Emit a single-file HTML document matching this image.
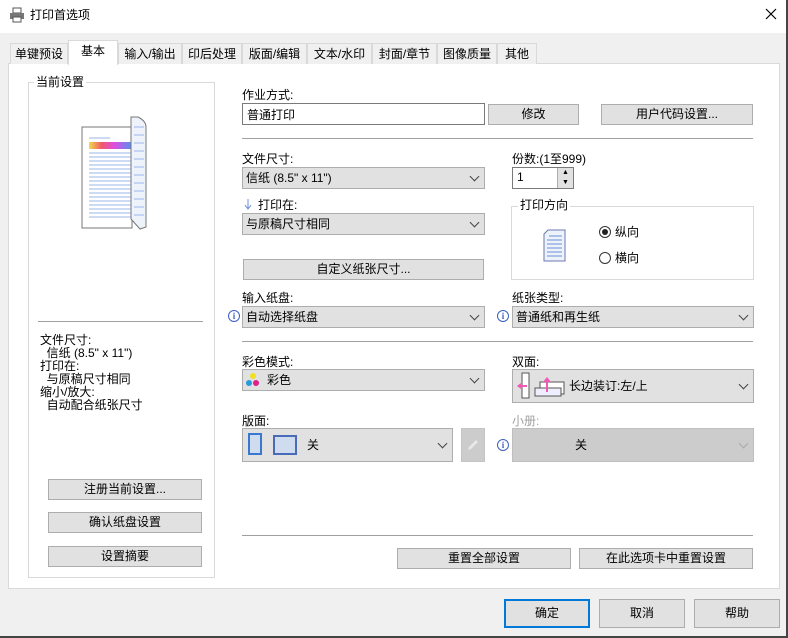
<!DOCTYPE html><html><head><meta charset="utf-8"><style>
*{box-sizing:border-box;margin:0;padding:0}
body{width:788px;height:638px;position:relative;background:#f0f0f0;font-family:"Liberation Sans","Noto Sans CJK SC",sans-serif;font-size:12px;color:#000;overflow:hidden}
.a{position:absolute}
.t{position:absolute;white-space:nowrap;line-height:14px}
.btn{position:absolute;background:#e1e1e1;border:1px solid #adadad;text-align:center;line-height:18px;white-space:nowrap}
.sel{position:absolute;background:#e1e1e1;border:1px solid #adadad;padding-left:3px;white-space:nowrap}
.chev{position:absolute;right:6px;width:7px;height:7px;border-right:1px solid #444;border-bottom:1px solid #444;transform:rotate(45deg)}
.hr{position:absolute;height:1px;background:#a0a0a0}
.tab{position:absolute;top:43px;height:21px;background:#f0f0f0;border:1px solid #d9d9d9;border-bottom:none;text-align:center;line-height:20px;white-space:nowrap}
.info{position:absolute;width:12px;height:12px;border:1px solid #3d5fc4;border-radius:50%;color:#3d5fc4;font-size:9px;line-height:10px;text-align:center;font-family:"Liberation Serif",serif;font-weight:bold}
.radio{position:absolute;width:12px;height:12px;border:1px solid #333;border-radius:50%;background:#fff}
</style></head><body>
<div class="a" style="left:0;top:0;width:788px;height:33px;background:#fff"></div>
<svg class="a" style="left:9px;top:7px" width="16" height="16"><rect x="4" y="1" width="8" height="5" fill="#fff" stroke="#555"/><rect x="1" y="6" width="14" height="6" fill="#777"/><rect x="4" y="10" width="8" height="5" fill="#fff" stroke="#555"/></svg>
<div class="t" style="left:30px;top:8px">打印首选项</div>
<svg class="a" style="left:765px;top:8px" width="12" height="12"><path d="M1 1L11 11M11 1L1 11" stroke="#000" stroke-width="1.2"/></svg>
<div class="a" style="left:8px;top:63px;width:772px;height:526px;background:#fff;border:1px solid #d9d9d9"></div>
<div class="tab" style="left:10px;width:58px">单键预设</div>
<div class="tab" style="left:68px;width:50px;top:40px;height:25px;background:#fff;z-index:2;line-height:20px">基本</div>
<div class="tab" style="left:118px;width:64px">输入/输出</div>
<div class="tab" style="left:182px;width:60px">印后处理</div>
<div class="tab" style="left:242px;width:65px">版面/编辑</div>
<div class="tab" style="left:307px;width:65px">文本/水印</div>
<div class="tab" style="left:372px;width:65px">封面/章节</div>
<div class="tab" style="left:437px;width:60px">图像质量</div>
<div class="tab" style="left:497px;width:40px">其他</div>

<div class="a" style="left:28px;top:82px;width:187px;height:496px;border:1px solid #d9d9d9"></div>
<div class="t" style="left:34px;top:75px;background:#fff;padding:0 2px">当前设置</div>
<svg class="a" style="left:80px;top:115px" width="72" height="116">
<rect x="2" y="12" width="50" height="101" fill="#fff" stroke="#777"/>
<line x1="9" y1="23" x2="30" y2="23" stroke="#9bb5e8"/>
<defs><linearGradient id="g"><stop offset="0" stop-color="#f5d84a"/><stop offset=".3" stop-color="#f05a6a"/><stop offset=".6" stop-color="#e04ee0"/><stop offset="1" stop-color="#5a8ef0"/></linearGradient></defs>
<rect x="9" y="27" width="42" height="7" fill="url(#g)"/>
<g stroke="#9bb5e8"><line x1="9" y1="38" x2="51" y2="38"/><line x1="9" y1="42" x2="51" y2="42"/><line x1="9" y1="46" x2="51" y2="46"/><line x1="9" y1="50" x2="51" y2="50"/><line x1="9" y1="54" x2="51" y2="54"/><line x1="9" y1="58" x2="51" y2="58"/><line x1="9" y1="62" x2="51" y2="62"/><line x1="9" y1="66" x2="51" y2="66"/><line x1="9" y1="70" x2="51" y2="70"/><line x1="9" y1="74" x2="51" y2="74"/><line x1="9" y1="78" x2="51" y2="78"/><line x1="9" y1="82" x2="51" y2="82"/><line x1="9" y1="86" x2="51" y2="86"/><line x1="9" y1="90" x2="51" y2="90"/><line x1="9" y1="94" x2="51" y2="94"/><line x1="9" y1="98" x2="51" y2="98"/><line x1="9" y1="102" x2="51" y2="102"/></g>
<path d="M51 2 L58 2 Q66 6 66 12 L66 112 L60 114 L51 104 Z" fill="#eef2fb" stroke="#777"/>
<g stroke="#9bb5e8"><line x1="54" y1="12" x2="64" y2="12"/><line x1="54" y1="20" x2="64" y2="20"/><line x1="54" y1="28" x2="64" y2="28"/><line x1="54" y1="36" x2="64" y2="36"/><line x1="54" y1="44" x2="64" y2="44"/><line x1="54" y1="52" x2="64" y2="52"/><line x1="54" y1="60" x2="64" y2="60"/><line x1="54" y1="68" x2="64" y2="68"/><line x1="54" y1="76" x2="64" y2="76"/><line x1="54" y1="84" x2="64" y2="84"/><line x1="54" y1="92" x2="64" y2="92"/><line x1="54" y1="100" x2="64" y2="100"/></g>
</svg>
<div class="hr" style="left:38px;top:321px;width:165px"></div>
<div class="t" style="left:40px;top:334px;line-height:13px">文件尺寸:<br>&nbsp;&nbsp;信纸 (8.5" x 11")<br>打印在:<br>&nbsp;&nbsp;与原稿尺寸相同<br>缩小/放大:<br>&nbsp;&nbsp;自动配合纸张尺寸</div>
<div class="btn" style="left:48px;top:479px;width:154px;height:21px">注册当前设置...</div>
<div class="btn" style="left:48px;top:512px;width:154px;height:21px">确认纸盘设置</div>
<div class="btn" style="left:48px;top:546px;width:154px;height:21px">设置摘要</div>

<div class="t" style="left:242px;top:88px">作业方式:</div>
<div class="a" style="left:242px;top:103px;width:243px;height:22px;border:1px solid #7a7a7a;background:#fff;padding:2px 4px">普通打印</div>
<div class="btn" style="left:488px;top:104px;width:91px;height:21px">修改</div>
<div class="btn" style="left:601px;top:104px;width:152px;height:21px">用户代码设置...</div>
<div class="hr" style="left:242px;top:138px;width:511px"></div>

<div class="t" style="left:242px;top:152px">文件尺寸:</div>
<div class="sel" style="left:242px;top:167px;width:243px;height:22px;line-height:20px">信纸 (8.5" x 11")<div class="chev" style="top:5px"></div></div>
<div class="t" style="left:512px;top:152px">份数:(1至999)</div>
<div class="a" style="left:512px;top:167px;width:62px;height:22px;border:1px solid #7a7a7a;background:#fff;padding:2px 4px">1</div>
<div class="a" style="left:557px;top:168px;width:16px;height:20px;background:#e1e1e1;border-left:1px solid #adadad;font-size:7px;text-align:center;line-height:10px">▲<br>▼</div>

<svg class="a" style="left:243px;top:198px" width="10" height="14"><path d="M5 1V10M2 7L5 11L8 7" stroke="#6a90d8" fill="none"/></svg>
<div class="t" style="left:258px;top:198px">打印在:</div>
<div class="sel" style="left:242px;top:213px;width:243px;height:22px;line-height:20px">与原稿尺寸相同<div class="chev" style="top:5px"></div></div>
<div class="a" style="left:511px;top:206px;width:243px;height:74px;border:1px solid #d9d9d9"></div>
<div class="t" style="left:518px;top:198px;background:#fff;padding:0 2px">打印方向</div>
<svg class="a" style="left:543px;top:229px" width="24" height="34"><path d="M5 1H22V32H1V5Z" fill="#eef2fb" stroke="#6a7ab0"/><g stroke="#6a90d8"><line x1="6" y1="7" x2="19" y2="7"/><line x1="4" y1="11" x2="19" y2="11"/><line x1="4" y1="15" x2="19" y2="15"/><line x1="4" y1="19" x2="19" y2="19"/><line x1="4" y1="23" x2="19" y2="23"/><line x1="4" y1="27" x2="19" y2="27"/></g></svg>
<div class="radio" style="left:599px;top:226px"><div class="a" style="left:2px;top:2px;width:6px;height:6px;border-radius:50%;background:#222"></div></div>
<div class="t" style="left:615px;top:225px">纵向</div>
<div class="radio" style="left:599px;top:252px"></div>
<div class="t" style="left:615px;top:251px">横向</div>
<div class="btn" style="left:243px;top:259px;width:241px;height:21px">自定义纸张尺寸...</div>

<div class="t" style="left:242px;top:291px">输入纸盘:</div>
<div class="info" style="left:228px;top:310px">i</div>
<div class="sel" style="left:242px;top:306px;width:243px;height:22px;line-height:20px">自动选择纸盘<div class="chev" style="top:5px"></div></div>
<div class="t" style="left:512px;top:291px">纸张类型:</div>
<div class="info" style="left:497px;top:310px">i</div>
<div class="sel" style="left:512px;top:306px;width:242px;height:22px;line-height:20px">普通纸和再生纸<div class="chev" style="top:5px"></div></div>
<div class="hr" style="left:242px;top:341px;width:511px"></div>

<div class="t" style="left:242px;top:355px">彩色模式:</div>
<div class="sel" style="left:242px;top:369px;width:243px;height:22px;line-height:20px;padding-left:24px">彩色<div class="chev" style="top:5px"></div></div>
<svg class="a" style="left:244px;top:372px" width="18" height="16"><circle cx="9" cy="4" r="3" fill="#f0e020"/><circle cx="5" cy="11" r="3" fill="#2a9ae0"/><circle cx="12" cy="11" r="3" fill="#e0208a"/></svg>
<div class="t" style="left:512px;top:355px">双面:</div>
<div class="sel" style="left:512px;top:369px;width:242px;height:34px;line-height:32px;padding-left:56px">长边装订:左/上<div class="chev" style="top:11px"></div></div>
<svg class="a" style="left:515px;top:372px" width="52" height="28"><path d="M7 1H14V26H7Z" fill="#fff" stroke="#555"/><path d="M3 14H12" stroke="#f05ab4" stroke-width="2"/><path d="M2 14L6 11V17Z" fill="#f05ab4"/><path d="M25 10H49V22H25Z" fill="#fff" stroke="#555"/><path d="M20 16H46V24H20Z" fill="#eef" stroke="#555"/><path d="M32 20V8" stroke="#f05ab4" stroke-width="2"/><path d="M28 10L32 5L36 10Z" fill="#f05ab4"/></svg>

<div class="t" style="left:242px;top:414px">版面:</div>
<div class="sel" style="left:242px;top:428px;width:211px;height:34px;line-height:32px;padding-left:64px">关<div class="chev" style="top:11px"></div></div>
<div class="a" style="left:248px;top:433px;width:14px;height:22px;border:2px solid #3a78d0;background:#cfdcf0"></div>
<div class="a" style="left:273px;top:435px;width:24px;height:20px;border:2px solid #4a6cb8;background:#cfdcf0"></div>
<div class="a" style="left:461px;top:428px;width:24px;height:34px;background:#ccc;border:1px solid #c4c4c4"></div>
<svg class="a" style="left:465px;top:437px" width="16" height="16"><path d="M3 13L4 10L11 3L13 5L6 12Z" fill="#e8e8e8"/></svg>
<div class="t" style="left:512px;top:414px;color:#a0a0a0">小册:</div>
<div class="info" style="left:497px;top:439px">i</div>
<div class="sel" style="left:512px;top:428px;width:242px;height:34px;line-height:32px;padding-left:62px;background:#ccc;border-color:#bfbfbf">关<div class="chev" style="top:11px;border-color:#aaa"></div></div>

<div class="hr" style="left:242px;top:535px;width:511px"></div>
<div class="btn" style="left:397px;top:548px;width:174px;height:21px">重置全部设置</div>
<div class="btn" style="left:579px;top:548px;width:174px;height:21px">在此选项卡中重置设置</div>

<div class="btn" style="left:504px;top:599px;width:86px;height:29px;line-height:25px;border:2px solid #0078d7">确定</div>
<div class="btn" style="left:599px;top:599px;width:86px;height:29px;line-height:27px">取消</div>
<div class="btn" style="left:694px;top:599px;width:86px;height:29px;line-height:27px">帮助</div>
<div class="a" style="left:786px;top:0;width:2px;height:638px;background:#444"></div>
<div class="a" style="left:0;top:636px;width:788px;height:2px;background:#444"></div>
</body></html>
